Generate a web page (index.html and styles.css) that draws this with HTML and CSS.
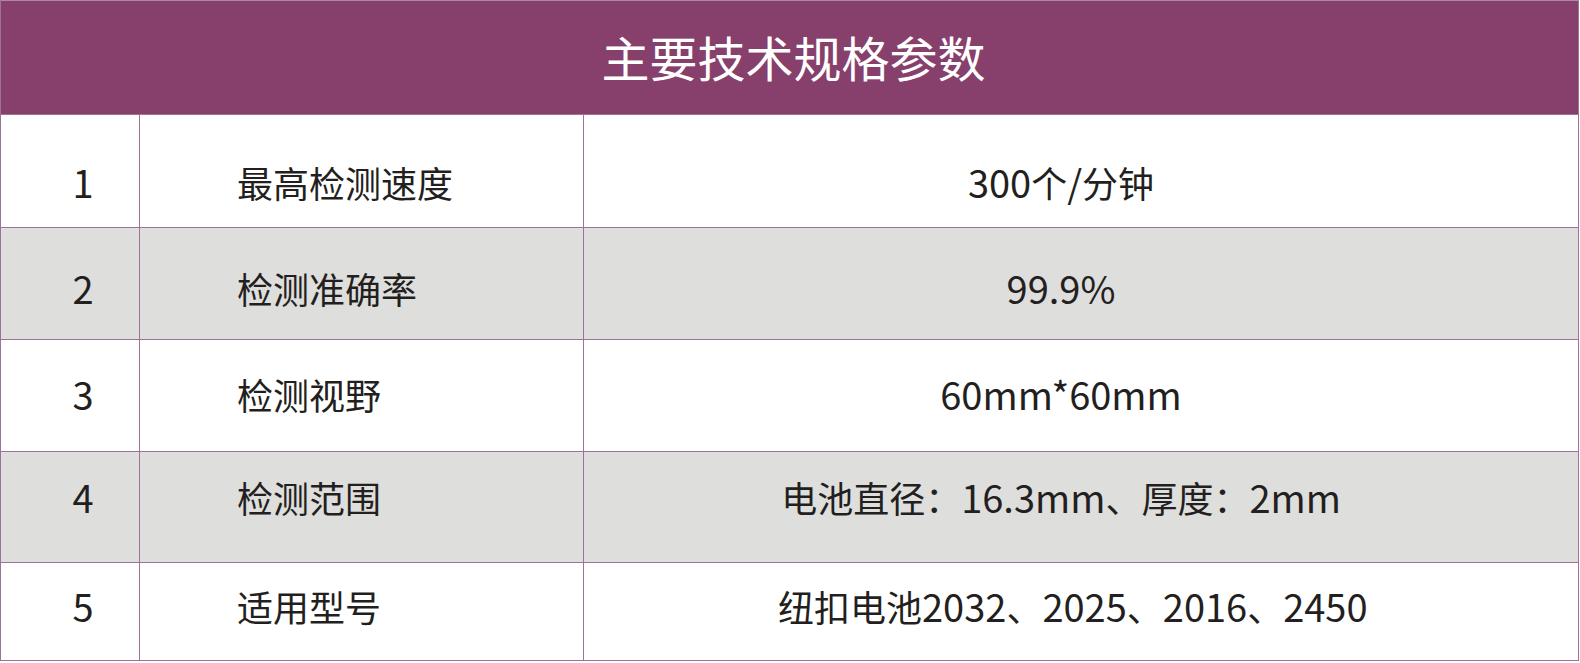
FILE: index.html
```html
<!DOCTYPE html>
<html lang="zh-CN">
<head>
<meta charset="utf-8">
<title>主要技术规格参数</title>
<link rel="stylesheet" href="styles.css">
</head>
<body>
<div class="spec">
  <div class="spec-head">主要技术规格参数</div>
  <div class="spec-body">
    <div class="cell num r1"><span class="lat">1</span></div>
    <div class="cell name r1">最高检测速度</div>
    <div class="cell val r1"><span class="lat">300</span>个<span class="lat">/</span>分钟</div>

    <div class="cell num r2 alt"><span class="lat">2</span></div>
    <div class="cell name r2 alt">检测准确率</div>
    <div class="cell val r2 alt"><span class="lat">99.9%</span></div>

    <div class="cell num r3"><span class="lat">3</span></div>
    <div class="cell name r3">检测视野</div>
    <div class="cell val r3"><span class="lat">60mm*60mm</span></div>

    <div class="cell num r4 alt"><span class="lat">4</span></div>
    <div class="cell name r4 alt">检测范围</div>
    <div class="cell val r4 alt">电池直径：<span class="lat">16.3mm</span>、厚度：<span class="lat">2mm</span></div>

    <div class="cell num r5"><span class="lat">5</span></div>
    <div class="cell name r5">适用型号</div>
    <div class="cell val val-left r5">纽扣电池<span class="lat">2032</span>、<span class="lat">2025</span>、<span class="lat">2016</span>、<span class="lat">2450</span></div>
  </div>
</div>
</body>
</html>
```

FILE: styles.css
```css
html, body {
  margin: 0;
  padding: 0;
  background: #ffffff;
}

body {
  font-family: "Noto Sans CJK SC", "Noto Sans", sans-serif;
  color: #231f20;
  overflow: hidden;
}

.spec {
  width: 1579px;
  border-left: 1px solid #9e7196;
  box-sizing: border-box;
}

.spec-head {
  height: 114px;
  border-top: 1px solid #a98aa0;
  border-right: 1px solid #9e7196;
  background: #873f6c;
  color: #ffffff;
  font-size: 48px;
  line-height: 1;
  display: flex;
  align-items: center;
  justify-content: center;
  padding-bottom: 4px;
  padding-left: 8px;
  box-sizing: border-box;
}

.spec-body {
  display: grid;
  grid-template-columns: 139px 444px 1fr;
  grid-template-rows: 113px 112px 112px 111px 99px;
}

.cell {
  border-top: 1px solid #9e7196;
  border-right: 1px solid #9e7196;
  font-size: 36px;
  line-height: 40px;
  display: flex;
  align-items: flex-start;
  white-space: nowrap;
  box-sizing: border-box;
}

.lat {
  font-size: 38px;
}

.r5 {
  border-bottom: 1px solid #9e7196;
}

.alt {
  background: #dededc;
}

.num {
  justify-content: center;
  padding-left: 26px;
}

.name {
  padding-left: 97px;
}

.val {
  justify-content: center;
  padding-right: 40px;
}

.val-left {
  justify-content: flex-start;
  padding-right: 0;
  padding-left: 194px;
}

.r1 { padding-top: 47px; }
.r2 { padding-top: 40px; }
.r3 { padding-top: 34px; }
.r4 { padding-top: 25px; }
.r5 { padding-top: 23px; }
```
